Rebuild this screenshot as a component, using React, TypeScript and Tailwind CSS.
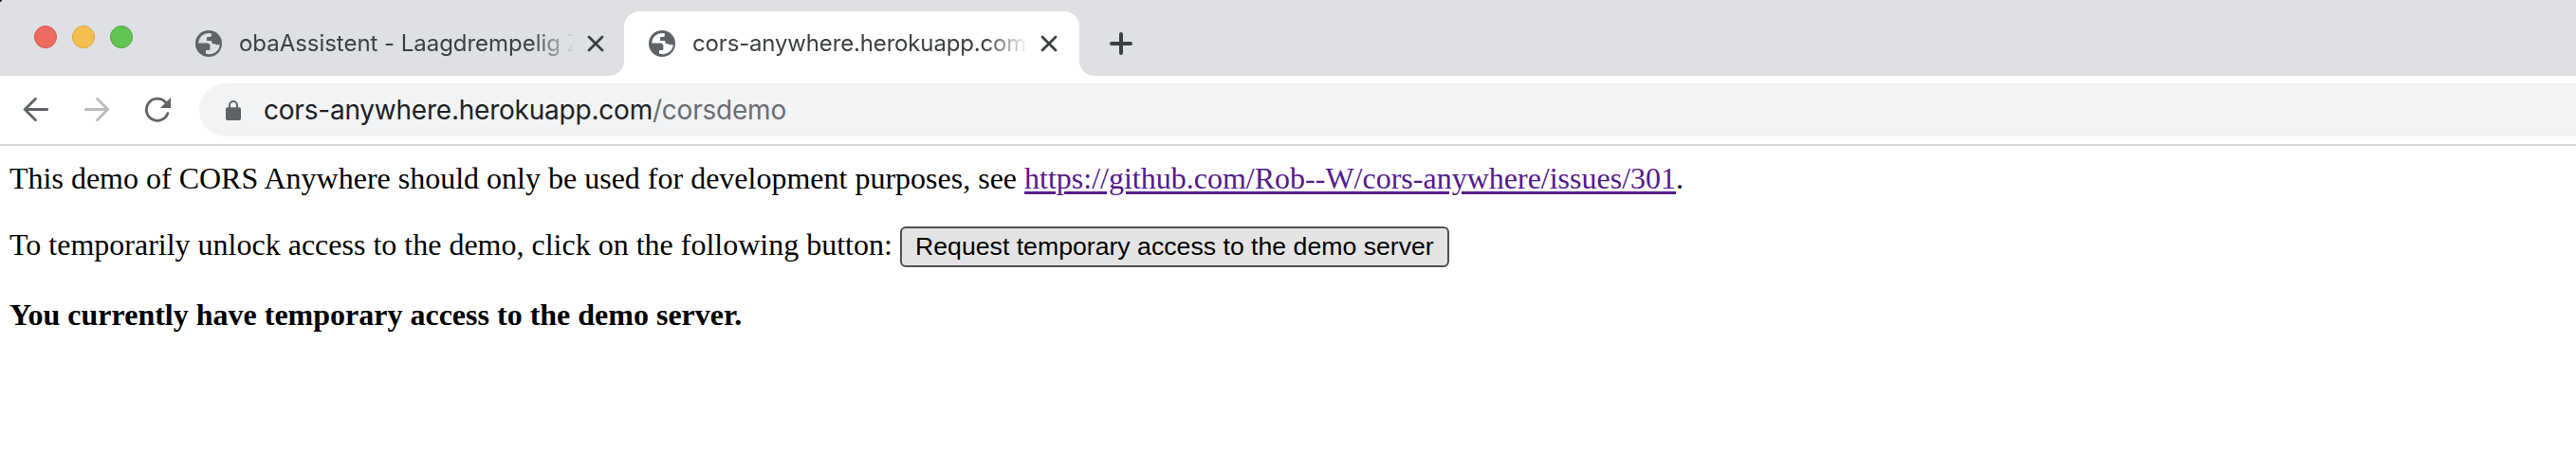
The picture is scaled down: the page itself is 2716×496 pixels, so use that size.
import React from "react";

function Globe({ bg }: { bg: string }) {
  return (
    <svg viewBox="0 0 28 28" className="size-7 shrink-0">
      <circle cx="14" cy="14" r="14" fill="#5f6368" />
      <path
        fill={bg}
        d="M3 13.6A11 11 0 0 1 14 3c1.2 0 2 .1 2.9 .4v1.8c0 1-.8 1.7-1.8 1.7h-3v3c0 .7-.6 1.2-1.2 1.2H12c0 0 1 0 1 0h3c1 0 1.6.8 1.6 1.6v1.6h2.4c1.4 0 1.6 1 2.6 1h3.2A11 11 0 0 1 11 24.6V21h3c1 0 1.4-.6 1.4-1.4v-3c0-1.6-1.2-3-2.8-3z"
      />
    </svg>
  );
}

function Close() {
  return (
    <svg viewBox="0 0 16 16" className="size-4 shrink-0 overflow-visible" stroke="#3c4043" strokeWidth="2.8" strokeLinecap="round">
      <path d="M1 1 15 15M15 1 1 15" />
    </svg>
  );
}

function Tab({ title, active = false }: { title: string; active?: boolean }) {
  return (
    <div className={active ? "relative flex h-[68px] w-[480px] items-center rounded-t-[16px] bg-white pl-[26px] tracking-[-0.16px]" : "flex h-[68px] w-[478px] items-center pl-[26px] tracking-[-0.04px]"}>
      {active && (
        <>
          <span className="absolute bottom-0 -left-4 size-4 bg-[radial-gradient(circle_at_0_0,#dee0e4_15.5px,white_16.5px)]" />
          <span className="absolute bottom-0 -right-4 size-4 bg-[radial-gradient(circle_at_100%_0,#dee0e4_15.5px,white_16.5px)]" />
        </>
      )}
      <Globe bg={active ? "#ffffff" : "#dee0e4"} />
      <span className="ml-[18px] w-[352px] overflow-hidden whitespace-nowrap text-[24px] leading-8 text-[#3c4043] [mask-image:linear-gradient(to_right,black_308px,transparent_354px)]">
        {title}
      </span>
      <span className="ml-4 flex">
        <Close />
      </span>
    </div>
  );
}

export default function App() {
  return (
    <div className="relative h-[496px] w-[2716px] overflow-hidden bg-white font-['Inter',sans-serif]">
      <span className="absolute top-0 left-0 size-[2px] rounded-br-full bg-black" />
      <div className="flex h-20 items-end bg-[#dee0e4]">
        <div className="flex h-20 w-[180px] shrink-0 gap-4 pt-[27px] pl-9">
          <span className="size-6 rounded-full border border-[#d9534a] bg-[#ec6b5f]" />
          <span className="size-6 rounded-full border border-[#dba440] bg-[#f5bf4f]" />
          <span className="size-6 rounded-full border border-[#4ea73c] bg-[#61c554]" />
        </div>
        <Tab title="obaAssistent - Laagdrempelig Zoeken" />
        <Tab title="cors-anywhere.herokuapp.com" active />
        <div className="flex h-[68px] items-center pl-8">
          <svg viewBox="0 0 24 24" className="size-6" stroke="#3c4043" strokeWidth="4" strokeLinecap="round">
            <path d="M12 2v20M2 12h20" />
          </svg>
        </div>
      </div>
      <div className="flex h-[74px] items-center border-b-2 border-[#dadbdd]">
        <div className="flex w-[210px] shrink-0 items-center pl-6">
          <svg viewBox="0 0 28 28" className="size-7" fill="none" stroke="#5f6368" strokeWidth="2.8" strokeLinecap="round">
            <path d="M13.5 2.2 2.3 13.5 13.5 24.8M2.5 13.5H25.7" />
          </svg>
          <svg viewBox="0 0 28 28" className="ml-9 size-7" fill="none" stroke="#babcbe" strokeWidth="2.8" strokeLinecap="round">
            <path d="M14.5 2.2 25.7 13.5 14.5 24.8M25.5 13.5H2.3" />
          </svg>
          <svg viewBox="0 0 28 28" className="ml-9 size-7" fill="none">
            <path d="M24.8 17.6A11.6 11.6 0 1 1 22.4 5.8" stroke="#5f6368" strokeWidth="2.8" strokeLinecap="round" />
            <path d="M28 1V12H17Z" fill="#5f6368" />
          </svg>
        </div>
        <div className="flex h-14 flex-1 items-center rounded-l-full bg-[#f1f3f4] pl-7">
          <svg viewBox="0 0 16 21" className="mt-px h-[21px] w-4 shrink-0">
            <rect y="7.3" width="16" height="13.7" rx="2" fill="#5f6368" />
            <path d="M4 8V5a4 4 0 0 1 8 0v3" fill="none" stroke="#5f6368" strokeWidth="2" />
          </svg>
          <span className="ml-6 text-[28px] leading-9 tracking-[-0.22px] whitespace-nowrap text-[#202124]">
            cors-anywhere.herokuapp.com<span className="text-[#6a6d70]">/corsdemo</span>
          </span>
        </div>
      </div>
      <main className="pt-4 pl-[10px] font-['Liberation_Serif',serif] text-[32px] leading-[36px] text-black">
        <p>
          This demo of CORS Anywhere should only be used for development purposes, see{" "}
          <a className="text-[#551a8b] underline decoration-[3px] underline-offset-[3px]">https://github.com/Rob--W/cors-anywhere/issues/301</a>.
        </p>
        <p className="mt-[33px] flex items-start">
          <span className="pt-px">To temporarily unlock access to the demo, click on the following button:</span>
          <button className="ml-2 flex h-[43px] w-[579px] items-center justify-center rounded-[6px] border-2 border-[#505050] bg-[#e4e4e4] pb-px font-['Liberation_Sans',sans-serif] text-[26.67px] leading-8">
            Request temporary access to the demo server
          </button>
        </p>
        <p className="mt-8 font-bold">You currently have temporary access to the demo server.</p>
      </main>
    </div>
  );
}
